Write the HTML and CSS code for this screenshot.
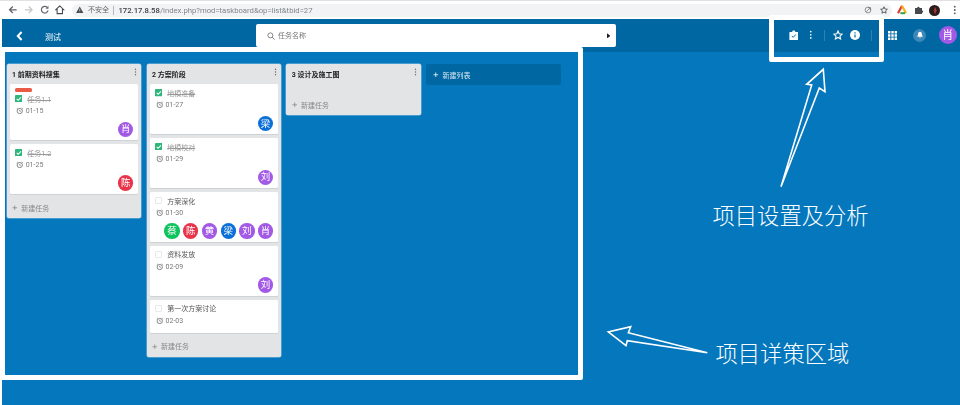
FILE: index.html
```html
<!DOCTYPE html>
<html lang="zh-CN">
<head>
<meta charset="utf-8">
<title>测试</title>
<link rel="stylesheet" href="styles.css">
</head>
<body>
<svg class="sprites" aria-hidden="true">
  <symbol id="i-clock" viewBox="0 0 10 10"><circle cx="5" cy="5.4" r="3.5" fill="none" stroke="currentColor" stroke-width="1"/><path d="M5 3.6v2l1.3.7M.9 2.6 2.4 1.2M9.1 2.6 7.6 1.2" fill="none" stroke="currentColor" stroke-width=".9"/></symbol>
  <symbol id="i-check" viewBox="0 0 10 10"><rect width="10" height="10" rx="1" fill="#2fb67a"/><path d="M2.3 5.2 4.2 7.1 7.9 3.2" fill="none" stroke="#fff" stroke-width="1.4"/></symbol>
  <symbol id="i-kebab" viewBox="0 0 4 12"><circle cx="2" cy="2" r="1.1" fill="currentColor"/><circle cx="2" cy="6" r="1.1" fill="currentColor"/><circle cx="2" cy="10" r="1.1" fill="currentColor"/></symbol>
  <symbol id="i-plus" viewBox="0 0 8 8"><path d="M4 .6v6.8M.6 4h6.8" fill="none" stroke="currentColor" stroke-width="1.1"/></symbol>
</svg>

<div class="page">
  <div class="browser">
    <div class="nav-icons">
      <svg class="nav-icon" viewBox="0 0 10 10"><path d="M9 5H1.800M5 1.600 1.600 5 5 8.400" fill="none" stroke="#5f6368" stroke-width="1.300"/></svg>
      <svg class="nav-icon" viewBox="0 0 10 10"><path d="M1 5h7.200M5 1.600 8.400 5 5 8.400" fill="none" stroke="#c4c7ca" stroke-width="1.300"/></svg>
      <svg class="nav-icon" viewBox="0 0 10 10"><path d="M8.400 5.600A3.500 3.500 0 1 1 7.400 2.400" fill="none" stroke="#5f6368" stroke-width="1.200"/><path d="M8.800 .8v3H5.800z" fill="#5f6368"/></svg>
      <svg class="nav-icon" viewBox="0 0 10 10"><path d="M5 1 1 4.800h1.200V9h5.600V4.800H9z" fill="none" stroke="#45484c" stroke-width="1.100"/></svg>
    </div>
    <div class="omnibox">
      <svg class="warn" viewBox="0 0 10 10"><path d="M5 .8 9.800 9.200H.2z" fill="#45484c"/><path d="M5 3.600v3M5 7.400v1" stroke="#f1f3f4" stroke-width=".9"/></svg>
      <span class="insecure">不安全</span>
      <span class="url"><b class="host">172.17.8.58</b>/index.php?mod=taskboard&amp;op=list&amp;tbid=27</span>
      <svg class="omni-icon share" viewBox="0 0 10 10"><circle cx="5" cy="5" r="3.600" fill="none" stroke="#6b6e72" stroke-width=".9"/><path d="M3 7 7.500 2.600M5 2h3v3" fill="none" stroke="#6b6e72" stroke-width=".9"/></svg>
      <svg class="omni-icon" viewBox="0 0 10 10"><path d="M5 1 6.200 3.800 9.200 4.100 7 6.100 7.600 9 5 7.500 2.400 9 3 6.100.8 4.100 3.800 3.800z" fill="none" stroke="#3d4043" stroke-width="1"/></svg>
    </div>
    <div class="ext-icons">
      <svg class="ext" viewBox="0 0 10 10"><path d="M5 .8 1 8.200" stroke="#e2382f" stroke-width="2.200"/><path d="M5 .8 9 8.200" stroke="#f3b51b" stroke-width="2.200"/><path d="M3.400 8.200H8" stroke="#2ba24c" stroke-width="2"/></svg>
      <svg class="ext" viewBox="0 0 10 10"><path d="M1 3h2.200a1.200 1.200 0 0 1 2.400 0H8v2.400a1.200 1.200 0 0 1 0 2.400V9H1z" fill="#45484c"/></svg>
      <svg class="ext profile" viewBox="0 0 10 10"><circle cx="5" cy="5" r="5" fill="#2b1c1e"/><path d="M5.600 1.600 7 5 5.400 8.600 4.400 5z" fill="#a33a32"/></svg>
      <svg class="ext kebab-b" viewBox="0 0 4 12"><use href="#i-kebab"/></svg>
    </div>
  </div>

  <div class="app">
    <header class="topbar">
      <div class="crumb">
        <svg class="back" viewBox="0 0 7 10"><path d="M5.600 1 1.800 5l3.800 4" fill="none" stroke="#fff" stroke-width="2"/></svg>
        <span class="project">测试</span>
      </div>
      <div class="search">
        <svg class="mag" viewBox="0 0 10 10"><circle cx="4.200" cy="4.200" r="3.100" fill="none" stroke="#777" stroke-width="1.100"/><path d="M6.600 6.600 9.400 9.400" stroke="#777" stroke-width="1.200"/></svg>
        <span class="search-text">任务名称</span>
        <svg class="tri" viewBox="0 0 4 6"><path d="M0 0 4 3 0 6z" fill="#222"/></svg>
      </div>
      <div class="tools">
        <svg class="tool clip" viewBox="0 0 10 11"><path d="M1 2h2.200L4 .6h2L6.800 2H9a.6.6 0 0 1 .6.6v7.600a.6.6 0 0 1-.6.6H1a.6.6 0 0 1-.6-.6V2.600A.6.6 0 0 1 1 2z" fill="#fff"/><path d="M2.900 6.200 4.400 7.700 7.200 4.700" fill="none" stroke="#0067a3" stroke-width="1"/></svg>
        <svg class="tool kebab-w" viewBox="0 0 4 12"><use href="#i-kebab"/></svg>
        <span class="vsep"></span>
        <svg class="tool star" viewBox="0 0 10 10"><path d="M5 1 6.200 3.800 9.200 4.100 7 6.100 7.600 9 5 7.500 2.400 9 3 6.100.8 4.100 3.800 3.800z" fill="none" stroke="#fff" stroke-width="1.100"/></svg>
        <svg class="tool info" viewBox="0 0 10 10"><circle cx="5" cy="5" r="5" fill="#fff"/><path d="M5 4.400v3.200M5 2.200v1.200" stroke="#0067a3" stroke-width="1.200"/></svg>
        <span class="vsep sep-b"></span>
        <svg class="tool grid" viewBox="0 0 9 9"><path d="M0 0h2.400v2.400H0zM3.300 0h2.400v2.400H3.300zM6.600 0H9v2.400H6.600zM0 3.300h2.400v2.400H0zM3.300 3.300h2.400v2.400H3.300zM6.600 3.300H9v2.400H6.600zM0 6.600h2.400V9H0zM3.300 6.600h2.400V9H3.300zM6.600 6.600H9V9H6.600z" fill="#fff"/></svg>
        <span class="bell"><svg viewBox="0 0 10 10"><path d="M5 .8C3.300.8 2.600 2.200 2.600 3.800c0 2-1 2.700-1.200 3.400h7.200c-.2-.7-1.200-1.400-1.200-3.400C7.400 2.200 6.700.8 5 .8zM4 8h2a1 1 0 0 1-2 0z" fill="#fff"/></svg></span>
        <span class="avatar avatar-me">肖</span>
      </div>
    </header>

    <main class="board">
      <section class="list">
        <div class="list-head"><h3>1 前期资料搜集</h3><svg class="list-menu" viewBox="0 0 4 12"><use href="#i-kebab"/></svg></div>
        <article class="card">
          <div class="label"></div>
          <div class="title done"><svg class="box"><use href="#i-check"/></svg><span>任务1.1</span></div>
          <div class="date"><svg class="clock"><use href="#i-clock"/></svg>01-15</div>
          <div class="people"><span class="avatar purple">肖</span></div>
        </article>
        <article class="card">
          <div class="title done"><svg class="box"><use href="#i-check"/></svg><span>任务1.2</span></div>
          <div class="date"><svg class="clock"><use href="#i-clock"/></svg>01-25</div>
          <div class="people"><span class="avatar red">陈</span></div>
        </article>
        <div class="add"><svg class="plus"><use href="#i-plus"/></svg>新建任务</div>
      </section>

      <section class="list">
        <div class="list-head"><h3>2 方案阶段</h3><svg class="list-menu" viewBox="0 0 4 12"><use href="#i-kebab"/></svg></div>
        <article class="card">
          <div class="title done"><svg class="box"><use href="#i-check"/></svg><span>地模准备</span></div>
          <div class="date"><svg class="clock"><use href="#i-clock"/></svg>01-27</div>
          <div class="people"><span class="avatar blue">梁</span></div>
        </article>
        <article class="card">
          <div class="title done"><svg class="box"><use href="#i-check"/></svg><span>地模校对</span></div>
          <div class="date"><svg class="clock"><use href="#i-clock"/></svg>01-29</div>
          <div class="people"><span class="avatar purple">刘</span></div>
        </article>
        <article class="card">
          <div class="title"><i class="box empty"></i><span>方案深化</span></div>
          <div class="date"><svg class="clock"><use href="#i-clock"/></svg>01-30</div>
          <div class="people">
            <span class="avatar green">蔡</span><span class="avatar red">陈</span><span class="avatar purple">黄</span><span class="avatar blue">梁</span><span class="avatar purple">刘</span><span class="avatar purple">肖</span>
          </div>
        </article>
        <article class="card">
          <div class="title"><i class="box empty"></i><span>资料发放</span></div>
          <div class="date"><svg class="clock"><use href="#i-clock"/></svg>02-09</div>
          <div class="people"><span class="avatar purple">刘</span></div>
        </article>
        <article class="card">
          <div class="title"><i class="box empty"></i><span>第一次方案讨论</span></div>
          <div class="date"><svg class="clock"><use href="#i-clock"/></svg>02-03</div>
        </article>
        <div class="add"><svg class="plus"><use href="#i-plus"/></svg>新建任务</div>
      </section>

      <section class="list">
        <div class="list-head"><h3>3 设计及施工图</h3><svg class="list-menu" viewBox="0 0 4 12"><use href="#i-kebab"/></svg></div>
        <div class="empty-area"></div>
        <div class="add"><svg class="plus"><use href="#i-plus"/></svg>新建任务</div>
      </section>

      <div class="new-list"><svg class="plus"><use href="#i-plus"/></svg>新建列表</div>
    </main>
  </div>

  <div class="frame frame-board"></div>
  <div class="frame frame-tools"></div>
  <svg class="arrows" viewBox="0 0 960 405" aria-hidden="true">
    <path d="M781 186.700 811.700 85 806.700 84.300 823.300 69.300 825 91.700 819.300 88z"/>
    <path d="M707.300 352.700 628.300 332.700 630.700 326.700 608.300 332 626 345.700 627.300 340.700z"/>
  </svg>
  <div class="note note-tools">项目设置及分析</div>
  <div class="note note-board">项目详策区域</div>
</div>
</body>
</html>
```
FILE: styles.css
```css
* { box-sizing: border-box; }
html, body { margin: 0; padding: 0; }
body { width: 960px; height: 405px; overflow: hidden; background: #fff; font-family: Roboto, "Noto Sans CJK SC", sans-serif; }
.sprites { position: absolute; width: 0; height: 0; }
.page { position: relative; width: 960px; height: 405px; overflow: hidden; }

/* browser chrome */
.browser { height: 19px; display: flex; align-items: center; background: #fff; border-top: 1px solid #dfe1e5; filter: blur(.35px); }
.nav-icons { display: flex; width: 72px; padding-left: 8.200px; gap: 6.100px; flex: none; }
.nav-icon { width: 9.600px; height: 9.600px; }
.omnibox { width: 820px; height: 13px; border-radius: 7px; background: #f1f3f4; display: flex; align-items: center; padding: 0 4px 0 4px; font-size: 7.700px; flex: none; }
.warn { width: 7.500px; height: 7.500px; flex: none; }
.insecure { color: #666; margin-left: 4.500px; padding-right: 4px; border-right: 1px solid #b5b8bc; line-height: 9px; font-size: 7px; }
.url { margin-left: 4.500px; color: #80868b; flex: 1; white-space: nowrap; }
.host { color: #3c4043; font-weight: 500; }
.omni-icon { width: 8px; height: 8px; margin-left: 8.500px; flex: none; }
.ext-icons { display: flex; align-items: center; flex: 1; padding-left: 5px; gap: 7px; }
.ext { width: 10px; height: 10px; flex: none; }
.profile { width: 11px; height: 11px; margin-left: -2px; }
.kebab-b { width: 3.500px; color: #55585c; margin-left: 5.500px; }

/* app */
.app { margin-left: 1.500px; height: 386px; background: #0477bd; }
.topbar, .board { filter: blur(.35px); }
.topbar { height: 33px; background: #0067a3; display: flex; color: #fff; }
.crumb { width: 254.500px; height: 33px; display: flex; align-items: center; flex: none; padding: 1px 0 0 14.500px; }
.back { width: 7px; height: 10px; }
.project { font-size: 8px; margin-left: 22px; }
.search { margin-top: 5px; width: 360px; height: 23px; background: #fff; border-radius: 2px; display: flex; align-items: center; padding: 0 6px 0 10.500px; }
.mag { width: 8px; height: 8px; flex: none; }
.search-text { font-size: 7px; color: #777; margin-left: 3.500px; flex: 1; padding-bottom: 1px; }
.tri { width: 3.500px; height: 5.500px; }
.tools { flex: 1; height: 33px; display: flex; align-items: center; padding-bottom: 1px; padding-left: 172.700px; }
.tool { flex: none; }
.clip { width: 9.500px; height: 10.500px; }
.kebab-w { width: 3.500px; height: 9.500px; margin-left: 10.500px; color: #fff; }
.vsep { width: 1px; height: 11px; background: rgba(255,255,255,.18); margin-left: 12.300px; flex: none; }
.star { width: 10px; height: 10px; margin-left: 7.300px; }
.info { width: 10px; height: 10px; margin-left: 7.400px; }
.sep-b { margin-left: 10.800px; }
.grid { width: 9px; height: 9px; margin-left: 16.200px; }
.bell { width: 13px; height: 13px; border-radius: 50%; background: #3b87b8; margin-left: 16.300px; display: flex; align-items: center; justify-content: center; flex: none; }
.bell svg { width: 8px; height: 8px; }

.avatar { width: 15.300px; height: 15.300px; border-radius: 50%; color: #fff; font-size: 9.500px; display: flex; align-items: center; justify-content: center; flex: none; line-height: 1; }
.avatar-me { width: 18px; height: 18px; margin-left: 12.300px; background: #a259e6; font-size: 11px; }
.purple { background: #a259e6; }
.red { background: #e8344a; }
.blue { background: #0a6fd6; }
.green { background: #0fc35f; }

.board { display: flex; align-items: flex-start; gap: 5.300px; padding: 12px 0 0 5.200px; }
.list { width: 134.600px; flex: none; background: #e2e4e6; border-radius: 2px; padding: 0 3.300px; box-shadow: 0 0 0 .5px rgba(255,255,255,.55); }
.list-head { height: 20px; display: flex; align-items: center; justify-content: space-between; padding: 0 0 0 2px; }
.list-head h3 { margin: 0; font-size: 7px; font-weight: 700; color: #222; }
.list-menu { width: 3px; height: 8px; color: #666; margin: -4px 0.500px 0 0; }
.card { background: #fff; border-radius: 1.500px; padding: 4.800px 4.700px 8.200px; box-shadow: 0 1px 0 #cfd2d6; margin-bottom: 3.600px; }
.label { width: 17.300px; height: 3.400px; background: #eb5a46; border-radius: 1.500px; margin: -.5px 0 3px; }
.title { height: 8px; display: flex; align-items: center; font-size: 7px; color: #555; }
.title.done { color: #999; }
.title.done span { text-decoration: line-through; }
.title span { margin-left: 5.200px; white-space: nowrap; }
.box { width: 7.500px; height: 7.500px; flex: none; display: block; }
.box.empty { background: #fff; border: 1px solid #e8e9eb; border-radius: 1px; }
.date { height: 8px; margin-top: 4.400px; display: flex; align-items: center; font-size: 7px; color: #777; padding-left: 1.300px; }
.clock { width: 7.500px; height: 7.500px; margin-right: 2.200px; color: #666; flex: none; }
.people { display: flex; justify-content: flex-end; gap: 3.400px; margin: 6.500px 0 -4.900px; }
.add { height: 24px; padding: 3px 0 0 2px; display: flex; align-items: center; font-size: 7px; color: #888; margin-top: -3.600px; }
.empty-area { height: 10.600px; }
.plus { width: 5.500px; height: 5.500px; margin-right: 3.700px; flex: none; color: #888; }
.new-list { width: 135px; height: 21px; background: #0067a3; border-radius: 2px; display: flex; align-items: center; padding-left: 7px; font-size: 7px; color: #d7e8f3; }
.new-list .plus { color: #fff; }

/* annotations drawn over the screenshot */
.frame { position: absolute; border: 5.500px solid #fff; border-radius: 2px; }
.frame-board { left: 0; top: 47px; width: 583px; height: 333px; }
.frame-tools { left: 769px; top: 15px; width: 115px; height: 47px; }
.arrows { position: absolute; left: 0; top: 0; width: 960px; height: 405px; pointer-events: none; }
.arrows path { fill: #0477bd; stroke: #fff; stroke-width: 1.600px; stroke-linejoin: miter; }
.note { position: absolute; color: #fff; font-size: 22.300px; line-height: 28px; white-space: nowrap; font-family: "Noto Sans CJK SC", sans-serif; font-weight: 300; }
.note-tools { left: 712.500px; top: 199.500px; }
.note-board { left: 715.500px; top: 337.500px; }
```
